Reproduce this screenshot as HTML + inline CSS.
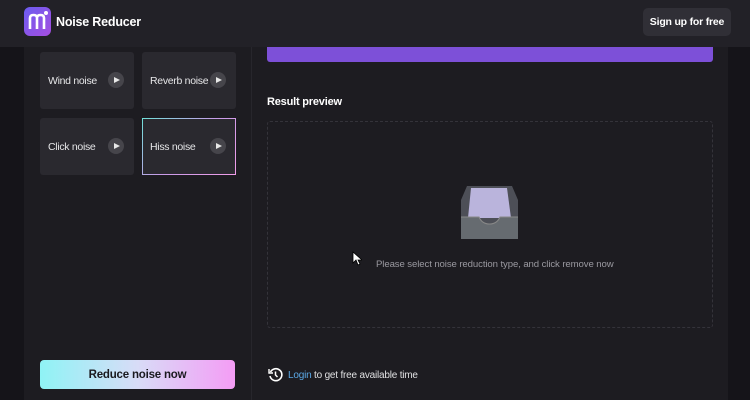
<!DOCTYPE html>
<html><head><style>
*{margin:0;padding:0;box-sizing:border-box}
body{width:750px;height:400px;background:#151419;font-family:"Liberation Sans",sans-serif;position:relative;overflow:hidden;color:#e8e8ea}
.hdr{position:absolute;left:0;top:0;width:750px;height:47px;background:#222127}
.logo{position:absolute;left:24px;top:7px;width:27px;height:29px;border-radius:6px;background:linear-gradient(135deg,#6b5cf0,#a64ee0)}
.title{position:absolute;left:56px;top:15px;font-size:12.5px;font-weight:bold;color:#fff;letter-spacing:-0.2px}
.sign{position:absolute;left:643px;top:8px;width:88px;height:28px;border-radius:5px;background:#302f36;color:#fff;font-weight:bold;font-size:10.5px;text-align:center;line-height:28px;letter-spacing:-0.2px}
.main{position:absolute;left:24px;top:47px;width:704px;height:353px;background:#1d1c21}
.div{position:absolute;left:251px;top:47px;width:1px;height:353px;background:#27262c}
.card{position:absolute;width:94px;height:57px;background:#2a292f;border-radius:3px;font-size:10.5px;letter-spacing:-0.3px;color:#e6e6e8;padding-left:8px;line-height:59px;white-space:nowrap}
.card .p{position:absolute;right:10px;top:20px;width:16px;height:16px;border-radius:50%;background:#46454b}
.card .p:after{content:"";position:absolute;left:6px;top:4.5px;border-left:6px solid #e8e8e8;border-top:3.5px solid transparent;border-bottom:3.5px solid transparent}
.hiss{border:1px solid;border-image:linear-gradient(135deg,#6fe0d8,#c89be8,#f09ce8) 1;padding-left:7px;line-height:57px}
.hiss .p{right:9px;top:19px}
.bar{position:absolute;left:267px;top:47px;width:446px;height:15px;background:#7d50d8;border-radius:0 0 3px 3px}
.rp{position:absolute;left:267px;top:96px;font-size:11px;font-weight:bold;color:#fff;letter-spacing:-0.2px}
.box{position:absolute;left:267px;top:121px;width:446px;height:207px;border:1px dashed #34333a;border-radius:3px}
.msg{position:absolute;left:376px;top:259px;font-size:9.6px;color:#9a99a0;letter-spacing:-0.1px}
.btn{position:absolute;left:40px;top:360px;width:195px;height:29px;border-radius:4px;background:linear-gradient(90deg,#8ff3f5,#d8dcf7 50%,#f49cf5);color:#1a1a1f;font-weight:bold;font-size:11.5px;text-align:center;line-height:31px;letter-spacing:-0.2px}
.login{position:absolute;left:288px;top:370px;font-size:10px;color:#e0e0e2;letter-spacing:-0.2px}
.login span{color:#5aa8e6}
</style></head><body>
<div class="hdr"></div>
<div class="logo"><svg width="27" height="29" viewBox="0 0 27 29"><path d="M6 22V11q0-3 3.5-3t3.5 3v11M13 11q0-3 3.5-3t3.5 3v11" stroke="#fff" stroke-width="2.6" fill="none"/><circle cx="22" cy="6" r="2" fill="#fff"/></svg></div>
<div class="title">Noise Reducer</div>
<div class="sign">Sign up for free</div>
<div class="main"></div>
<div class="div"></div>
<div class="card" style="left:40px;top:52px">Wind noise<div class="p"></div></div>
<div class="card" style="left:142px;top:52px">Reverb noise<div class="p"></div></div>
<div class="card" style="left:40px;top:118px">Click noise<div class="p"></div></div>
<div class="card hiss" style="left:142px;top:118px">Hiss noise<div class="p"></div></div>
<div class="bar"></div>
<div class="rp">Result preview</div>
<div class="box"></div>
<svg style="position:absolute;left:461px;top:184px" width="57" height="55" viewBox="0 0 57 55"><path d="M6 2h45l6 14v39H0V16z" fill="#4d4f57"/><path d="M10 4h36l4 30H7z" fill="#bab4dc"/><path d="M0 33h18q3 7 10.5 7t10.5-7h18v22H0z" fill="#666b70"/><path d="M0 33h18q3 7 10.5 7t10.5-7h18" stroke="#888" fill="none"/></svg>
<div class="msg">Please select noise reduction type, and click remove now</div>
<svg style="position:absolute;left:352px;top:251px" width="10" height="15" viewBox="0 0 10 15"><path d="M1 1v11l3-3 2 5 2-1-2-4h4z" fill="#fff" stroke="#000" stroke-width=".8"/></svg>
<div class="btn">Reduce noise now</div>
<svg style="position:absolute;left:268px;top:367px" width="15" height="15" viewBox="0 0 15 15"><path d="M2.5 5A6 6 0 1 1 2 9" stroke="#fff" stroke-width="1.6" fill="none"/><path d="M1 2v4h4" stroke="#fff" stroke-width="1.4" fill="none"/><path d="M7.5 4.5v3.5l2 2" stroke="#fff" stroke-width="1.5" fill="none"/></svg>
<div class="login"><span>Login</span> to get free available time</div>
</body></html>
